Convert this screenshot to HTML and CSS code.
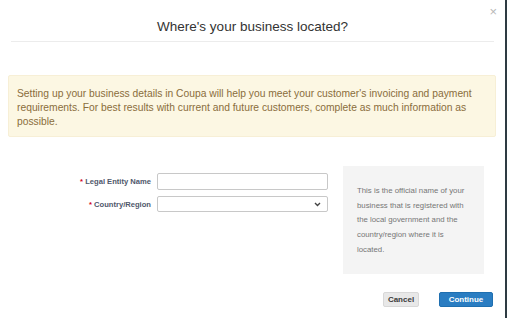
FILE: index.html
```html
<!DOCTYPE html>
<html>
<head>
<meta charset="utf-8">
<link rel="stylesheet" href="styles.css">
</head>
<body>
<div class="modal">
  <button class="close" aria-label="Close">×</button>
  <header class="modal-header">
    <h1 class="title">Where's your business located?</h1>
  </header>
  <div class="alert">Setting up your business details in Coupa will help you meet your customer's invoicing and payment requirements. For best results with current and future customers, complete as much information as possible.</div>
  <div class="form-area">
    <div class="fields">
      <label class="label"><span class="req">*</span> Legal Entity Name</label>
      <input class="input" type="text">
      <label class="label"><span class="req">*</span> Country/Region</label>
      <div class="select">
        <svg class="chev" width="7" height="5" viewBox="0 0 7 5"><path d="M1 1l2.5 2.5L6 1" fill="none" stroke="#444" stroke-width="1.4"/></svg>
      </div>
    </div>
    <div class="help">This is the official name of your business that is registered with the local government and the country/region where it is located.</div>
  </div>
  <div class="footer">
    <button class="btn btn-cancel">Cancel</button>
    <button class="btn btn-primary">Continue</button>
  </div>
</div>
</body>
</html>
```
FILE: styles.css
```css
html, body {
  margin: 0;
  padding: 0;
  background: #fff;
}
body {
  width: 508px;
  height: 318px;
  overflow: hidden;
  font-family: "Liberation Sans", Arial, sans-serif;
}
.modal {
  position: relative;
  width: 507px;
  height: 318px;
  box-sizing: border-box;
  border-right: 2px solid #2e3b43;
  background: #fff;
}
.close {
  position: absolute;
  top: 5px;
  right: 8px;
  border: 0;
  background: none;
  padding: 0;
  font-size: 13px;
  line-height: 13px;
  color: #b8b8b8;
  font-family: "Liberation Sans", Arial, sans-serif;
}
.modal-header {
  margin: 0 11px;
  height: 42px;
  box-sizing: border-box;
  border-bottom: 1px solid #ececec;
  display: flex;
  align-items: center;
  justify-content: center;
}
.title {
  margin: 0;
  padding-top: 12px;
  font-size: 13.5px;
  font-weight: normal;
  color: #333;
  line-height: 16px;
}
.alert {
  margin: 33px 9px 0 8px;
  height: 62px;
  box-sizing: border-box;
  padding: 11px 8px 0 8px;
  background: #fcf7e3;
  border: 1px solid #f7efd6;
  border-radius: 2px;
  color: #8a6d3b;
  font-size: 10.3px;
  line-height: 14px;
}
.form-area {
  display: flex;
  align-items: flex-start;
  margin-top: 29px;
}
.fields {
  display: grid;
  grid-template-columns: 151px 171px;
  column-gap: 6px;
  row-gap: 6px;
  margin-top: 7px;
  align-items: center;
}
.label {
  text-align: right;
  font-size: 7.6px;
  font-weight: bold;
  color: #4f586b;
}
.req {
  color: #d0021b;
}
.input, .select {
  display: block;
  width: 171px;
  height: 17px;
  box-sizing: border-box;
  border: 1px solid #c8c8c8;
  border-radius: 2px;
  background: #fff;
  margin: 0;
  padding: 0;
}
.select {
  height: 16px;
  display: flex;
  align-items: center;
  justify-content: flex-end;
  padding-right: 6px;
}
.help {
  margin-left: 15px;
  width: 141px;
  height: 108px;
  box-sizing: border-box;
  padding: 18px 12px 0 14px;
  background: #f4f4f4;
  color: #767676;
  font-size: 7.8px;
  line-height: 14.7px;
}
.footer {
  display: flex;
  justify-content: flex-end;
  gap: 20px;
  margin-top: 18px;
  padding-right: 12px;
}
.btn {
  height: 15px;
  box-sizing: border-box;
  border-radius: 2px;
  font-family: "Liberation Sans", Arial, sans-serif;
  font-size: 8px;
  font-weight: bold;
  padding: 0;
  line-height: 13px;
}
.btn-cancel {
  width: 36px;
  background: #e8e8e8;
  border: 1px solid #d8d8d8;
  color: #3a3a3a;
}
.btn-primary {
  width: 54px;
  background: #2a7dc2;
  border: 1px solid #1f6fb0;
  color: #fff;
}
```
